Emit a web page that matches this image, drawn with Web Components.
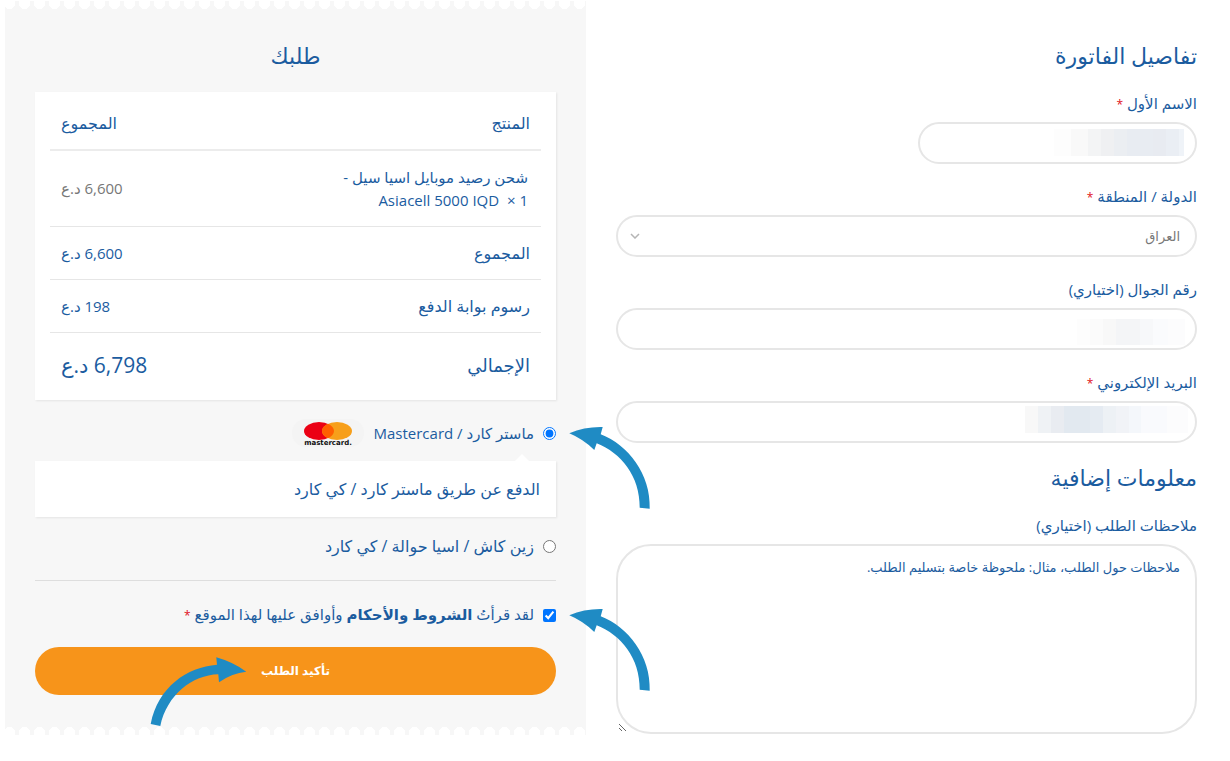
<!DOCTYPE html>
<html lang="ar" dir="rtl">
<head>
<meta charset="utf-8">
<meta name="viewport" content="width=device-width, initial-scale=1">
<title>إتمام الطلب</title>
<style>
  body {
    margin: 0;
    background: #fff;
    color: #1b5c9f;
    font: 15px/24px "Open Sans", "DejaVu Sans", sans-serif;
    --line: #e6e6e6;
    --panel: #f7f7f7;
    --accent: #f7941a;
    --hint: #1f8bc4;
  }
</style>
</head>
<body>
<checkout-page>
  <billing-form slot="billing"></billing-form>
  <order-review slot="review"></order-review>
</checkout-page>

<script>
class CheckoutPage extends HTMLElement {
  constructor() {
    super();
    this.attachShadow({ mode: 'open' }).innerHTML = `
      <style>
        :host { display: block; }
        main {
          display: grid;
          grid-template-columns: minmax(0, 1fr) minmax(0, 1fr);
          align-items: start;
          gap: 30px;
          padding: 0 33px 26px 5px;
        }
      </style>
      <main>
        <slot name="billing"></slot>
        <slot name="review"></slot>
      </main>
    `;
  }
}

class FormField extends HTMLElement {
  constructor() {
    super();
    this.attachShadow({ mode: 'open' });
  }

  connectedCallback() {
    const type = this.getAttribute('type') || 'text';
    const star = this.hasAttribute('required') ? ' <span class="star">*</span>' : '';
    let control = `<input id="control" type="${type}">`;

    if (type === 'select') {
      control = `
        <div class="select">
          <select id="control"><option>${this.getAttribute('value')}</option></select>
          <svg viewBox="0 0 10 6" width="10" height="6"><path d="M1 1l4 4 4-4" fill="none" stroke="#b5b5b5" stroke-width="1.5"/></svg>
        </div>`;
    }
    if (type === 'textarea') {
      control = `<textarea id="control" placeholder="${this.getAttribute('placeholder')}"></textarea>`;
    }

    this.shadowRoot.innerHTML = `
      <style>
        :host { display: block; }
        label { display: block; height: 28px; line-height: 18px; }
        .star { color: #e01020; font-size: 12px; }
        input, select, textarea {
          display: block;
          box-sizing: border-box;
          width: 100%;
          height: 42px;
          margin: 0;
          padding: 0 15px;
          border: 2px solid var(--line);
          border-radius: 21px;
          background-color: #fff;
          background-image: var(--fill, none);
          background-repeat: no-repeat;
          background-origin: border-box;
          background-position: var(--fill-pos, 0 0);
          background-size: var(--fill-size, auto);
          color: #777;
          font: inherit;
          font-size: 13px;
          appearance: none;
          outline: none;
        }
        textarea {
          height: 190px;
          padding: 10px 15px;
          border-radius: 35px;
          line-height: 22px;
          resize: both;
        }
        textarea::placeholder { color: #1b5c9f; opacity: 1; }
        .select { display: grid; align-items: center; }
        .select > * { grid-area: 1 / 1; }
        svg { justify-self: end; margin-inline-end: 14px; pointer-events: none; }
      </style>
      <label for="control"><slot></slot>${star}</label>
      ${control}
    `;
  }
}

class BillingForm extends HTMLElement {
  constructor() {
    super();
    this.attachShadow({ mode: 'open' }).innerHTML = `
      <style>
        :host { display: block; padding-top: 38px; }
        form { display: grid; gap: 23px; }
        h3 { margin: 0; padding-bottom: 2px; font-size: 22px; line-height: 34px; font-weight: 400; }
        .more { margin-top: -6px; }
        h3 + form-field { margin-top: -3px; }
        .half { width: 48%; }
        .name {
          --fill: linear-gradient(to right, #fdfdfd 13%, #f9f9f9 0 26%, #f3f4f5 0 36%, #eff0f2 0 46%, #ebeef2 0 56%, #e8ecf2 0 76%, #e8ebf1 0 86%, #eaeef4 0 96%, #eff3f8 0);
          --fill-size: 130px 27px;
          --fill-pos: right 13px top 7px;
        }
        .phone {
          --fill: linear-gradient(to right, #fdfdfd 12%, #fbfbfb 0 24%, #f8f8f8 0 36%, #f4f5f7 0 58%, #f7f8fa 0 70%, #fafbfd 0 84%, #fcfcfd 0);
          --fill-size: 108px 26px;
          --fill-pos: right 12px top 11px;
        }
        .email {
          --fill: linear-gradient(to right, #f8f8f8 8%, #eff2f5 0 16%, #e9ecf1 0 24%, #e2e9f0 0 40%, #e5ebf2 0 48%, #edf1f5 0 56%, #f1f3f7 0 64%, #f4f7fb 0 71%, #f9fafd 0 87%, #fcfcfd 0);
          --fill-size: 163px 27px;
          --fill-pos: right 9px top 5px;
        }
      </style>
      <form>
        <h3>تفاصيل الفاتورة</h3>
        <form-field class="half name" required>الاسم الأول</form-field>
        <form-field type="select" value="العراق" required>الدولة / المنطقة</form-field>
        <form-field class="phone" type="tel">رقم الجوال (اختياري)</form-field>
        <form-field class="email" type="email" required>البريد الإلكتروني</form-field>
        <h3 class="more">معلومات إضافية</h3>
        <form-field type="textarea" placeholder="ملاحظات حول الطلب، مثال: ملحوظة خاصة بتسليم الطلب.">ملاحظات الطلب (اختياري)</form-field>
      </form>
    `;
  }
}

class HintArrow extends HTMLElement {
  constructor() {
    super();
    this.attachShadow({ mode: 'open' });
  }

  connectedCallback() {
    const shapes = {
      start: 'M0.3 7.3Q16 0.5 33.7 1L31.7 8.3C59 19 82 48 80.7 82.7L70.7 81.7C71 50 52 27 27.7 17.3L25.3 24Q14 13 0.3 7.3Z',
      end: 'M96.3 14.7Q83 5 66.3 0.3L67 7.7C37 10 8 30 0.7 67L10.3 69C17 38 42 18 68.3 17.3L69 25.3Q82 16 96.3 14.7Z'
    };
    this.shadowRoot.innerHTML = `
      <style>
        :host { position: absolute; z-index: 2; pointer-events: none; }
        svg { display: block; }
        path { fill: var(--hint); }
      </style>
      <svg width="98" height="84" viewBox="0 0 98 84" aria-hidden="true"><path d="${shapes[this.getAttribute('to')]}"/></svg>
    `;
  }
}

class OrderTable extends HTMLElement {
  constructor() {
    super();
    this.attachShadow({ mode: 'open' }).innerHTML = `
      <style>
        :host {
          display: block;
          padding: 0 15px;
          background: #fff;
          box-shadow: 1px 1px 2px rgba(0, 0, 0, 0.08);
        }
        table { width: 100%; border-collapse: collapse; }
        th, td {
          height: 52px;
          padding: 0 11px;
          border-bottom: 1px solid var(--line);
          font-size: 16px;
          font-weight: 400;
          text-align: start;
        }
        th:last-child, td:last-child { text-align: end; }
        thead th { height: 58px; padding-top: 4px; border-bottom: 2px solid #ececec; box-sizing: border-box; }
        td { font-size: 15px; }
        .item td { height: 75px; padding: 0 13px; line-height: 23px; }
        .item td:last-child { color: #777; padding: 0 11px; }
        .total > * { height: 63px; padding-bottom: 4px; border-bottom: 0; }
        .total th { font-size: 18px; }
        .total td { font-size: 21px; }
      </style>
      <table>
        <thead>
          <tr><th scope="col">المنتج</th><th scope="col">المجموع</th></tr>
        </thead>
        <tbody>
          <tr class="item"><td>شحن رصيد موبايل اسيا سيل -<br>Asiacell 5000 IQD&nbsp; ×&nbsp;1</td><td>6,600&nbsp;د.ع</td></tr>
          <tr><th scope="row">المجموع</th><td>6,600&nbsp;د.ع</td></tr>
          <tr><th scope="row">رسوم بوابة الدفع</th><td>198&nbsp;د.ع</td></tr>
          <tr class="total"><th scope="row">الإجمالي</th><td>6,798&nbsp;د.ع</td></tr>
        </tbody>
      </table>
    `;
  }
}

class MastercardLogo extends HTMLElement {
  constructor() {
    super();
    this.attachShadow({ mode: 'open' }).innerHTML = `
      <style>
        :host { display: block; }
        svg { display: block; }
      </style>
      <svg width="72" height="28" viewBox="0 0 72 28" role="img" aria-label="mastercard">
        <rect width="72" height="28" rx="14" fill="#f4f4f4"/>
        <ellipse cx="27" cy="12" rx="15" ry="9" fill="#eb0014"/>
        <ellipse cx="45" cy="12" rx="15" ry="9" fill="#f79f1a"/>
        <path d="M36 4.8a15 9 0 0 1 0 14.4a15 9 0 0 1 0-14.4z" fill="#ff5f00"/>
        <text x="36" y="26" direction="ltr" text-anchor="middle" font-family="DejaVu Sans, sans-serif" font-weight="700" font-size="7" fill="#111">mastercard.</text>
      </svg>
    `;
  }
}

class OrderReview extends HTMLElement {
  constructor() {
    super();
    this.attachShadow({ mode: 'open' }).innerHTML = `
      <style>
        :host {
          display: block;
          position: relative;
          padding: 38px 30px 40px;
          background: var(--panel);
        }
        /* torn receipt edges */
        :host::before, :host::after {
          content: "";
          position: absolute;
          left: 0;
          right: 0;
          height: 8px;
          background: radial-gradient(circle at 50% 2px, #fff 6px, transparent 6px) -3px 0 / 15px 8px repeat-x;
        }
        :host::before { top: 0; border-top: 1px solid #fff; }
        :host::after { bottom: 0; transform: scaleY(-1); }
        h3 { margin: 0 0 18px; padding-bottom: 2px; font-size: 22px; line-height: 34px; font-weight: 400; text-align: center; }
        .row { position: relative; display: flex; align-items: center; gap: 9px; height: 28px; }
        .card { margin-top: 19px; }
        input { flex: none; width: 13px; height: 13px; margin: 0; accent-color: #0075ff; }
        label { white-space: nowrap; }
        .note {
          position: relative;
          margin: 14px 0 15px;
          padding: 16px;
          background: #fff;
          box-shadow: 1px 1px 2px rgba(0, 0, 0, 0.08);
          font-size: 16px;
        }
        .note::before {
          content: "";
          position: absolute;
          top: -7px;
          right: 27px;
          border: 7px solid transparent;
          border-top: 0;
          border-bottom-color: #fff;
        }
        .cash { font-size: 16px; }
        .terms { margin: 20px 0 18px; padding-top: 20px; border-top: 1px solid #dedede; }
        a { color: inherit; font-weight: 700; text-decoration: none; }
        .star { color: #e01020; font-size: 12px; }
        .submit { position: relative; }
        button {
          display: block;
          width: 100%;
          height: 48px;
          border: 0;
          border-radius: 24px;
          background: var(--accent);
          color: #fff;
          font: inherit;
          font-size: 12px;
          font-weight: 600;
        }
        .row hint-arrow { left: calc(100% + 13px); bottom: -63px; }
        .submit hint-arrow { left: 22%; top: 10px; }
      </style>
      <h3>طلبك</h3>
      <order-table></order-table>
      <div class="row card">
        <input type="radio" name="pay" id="card" checked>
        <label for="card">ماستر كارد / Mastercard</label>
        <mastercard-logo></mastercard-logo>
        <hint-arrow to="start"></hint-arrow>
      </div>
      <div class="note">الدفع عن طريق ماستر كارد / كي كارد</div>
      <div class="row cash">
        <input type="radio" name="pay" id="cash">
        <label for="cash">زين كاش / اسيا حوالة / كي كارد</label>
      </div>
      <div class="row terms">
        <input type="checkbox" id="terms" checked>
        <label for="terms">لقد قرأتُ <a href="#terms">الشروط والأحكام</a> وأوافق عليها لهذا الموقع <span class="star">*</span></label>
        <hint-arrow to="start"></hint-arrow>
      </div>
      <div class="submit">
        <button type="button">تأكيد الطلب</button>
        <hint-arrow to="end"></hint-arrow>
      </div>
    `;
  }
}

customElements.define('checkout-page', CheckoutPage);
customElements.define('form-field', FormField);
customElements.define('billing-form', BillingForm);
customElements.define('hint-arrow', HintArrow);
customElements.define('order-table', OrderTable);
customElements.define('mastercard-logo', MastercardLogo);
customElements.define('order-review', OrderReview);
</script>
</body>
</html>
